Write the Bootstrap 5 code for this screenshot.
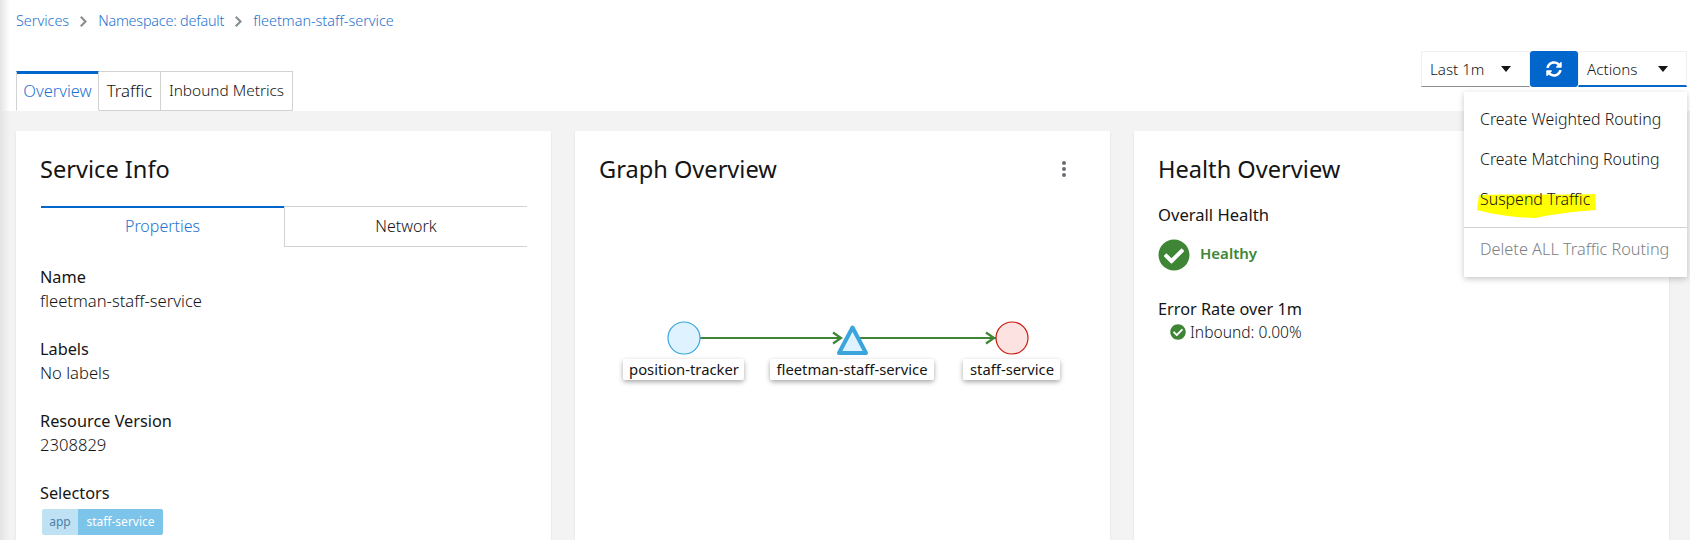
<!doctype html>
<html lang="en">
<head>
<meta charset="utf-8">
<title>fleetman-staff-service</title>
<link href="https://cdn.jsdelivr.net/npm/bootstrap@5.3.0/dist/css/bootstrap.min.css" rel="stylesheet">
<style>
html,body{height:540px;overflow:hidden}
body{font-family:"Noto Sans","Liberation Sans",sans-serif;font-size:16px;line-height:24px;color:#151515;background:#f3f3f3;position:relative}
body::before{content:"";position:absolute;left:0;top:0;bottom:0;width:10px;background:linear-gradient(90deg,#e4e4e4,rgba(228,228,228,0));z-index:3}
.pg-head{background:#fff;height:111px;padding:0 3px 0 16px;position:relative}
.crumbs{height:42px;font-size:14.400px;font-weight:300}
.crumbs a{color:#1f74cf;text-decoration:none}
.crumbs svg{width:7px;height:11px;fill:#8a8d90;margin:0 11px}
.crumbs .cr-n{letter-spacing:-.2px}
.head-row{height:69px}
.tabs-x{align-self:flex-end;height:40px}
.tabx{border:1px solid #d2d2d2;border-left-width:0;padding:0;background:#fff;color:#151515;line-height:38px;white-space:nowrap;text-align:center;font-weight:300}
.tabx:nth-child(1){border-left-width:1px;border-bottom-color:#fff;color:#1f74cf;box-shadow:inset 0 2px 0 #0066cc;border-top-color:#0066cc;width:83px;font-size:16.500px}
.tabx:nth-child(2){width:62px;font-size:16.800px}
.tabx:nth-child(3){width:132px;font-size:15.400px}
.tools{align-self:flex-start;margin-top:9px;height:36px}
.sel{width:109px;height:36px;border:1px solid #f0f0f0;border-bottom:1px solid #8a8d90;padding:0 8px;justify-content:space-between;font-size:15.200px;font-weight:300}
.sel i{border:5.500px solid transparent;border-top:6px solid #151515;border-bottom:0;margin-right:10px}
.sel-on{border-bottom:2px solid #0066cc}
.btn-sync{width:48px;height:36px;background:#0066cc;border-radius:3px}
.btn-sync svg{width:16px;height:16px;fill:#fff}
.act-menu{display:block;position:absolute;top:92px;right:3px;width:223px;height:185px;border:0;border-radius:0;padding:7px 0 8px;box-shadow:0 2px 6px rgba(3,3,3,.22);z-index:5}
.act-menu .dropdown-item{padding:0 16px;height:40px;line-height:40px;font-size:15.900px;font-weight:300;color:#151515}
.act-menu .dropdown-item.disabled{color:#7d8186;height:42px;line-height:42px;font-size:16.300px}
.act-menu .dropdown-divider{margin:8px 0 0;border-color:#d2d2d2;opacity:1}
.hl-wrap{position:relative;z-index:0}
.hl-mark{position:absolute;left:13px;top:15px;width:119px;height:24px;z-index:-1;fill:#ffff00}
.pg-body{padding:20px 21px 0 16px;gap:24px}
.pan{width:535px;height:409px;overflow:hidden;background:#fff;border:0;border-radius:0;box-shadow:0 1px 2px rgba(3,3,3,.1);padding:22px 24px 0;flex:none}
.pan h2{font-size:23.600px;line-height:30px;font-weight:400;margin:1px 0 0}
.sub-tabs{margin:22px 0 0 1px;height:41px;width:486px;font-weight:300}
.sub-tabs div{height:41px;line-height:38px;text-align:center;border-top:1px solid #d2d2d2;border-bottom:1px solid #d2d2d2}
.sub-a{width:243px;border-top:2px solid #0066cc!important;border-bottom:0!important;color:#1f74cf;line-height:37px!important}
.sub-b{flex:1;border-left:1px solid #d2d2d2}
.fld{margin-bottom:24px}
.fld b{display:block;font-weight:400;font-size:16.300px;line-height:24px}
.fld span{display:block;line-height:24px;font-weight:300;font-size:16.600px}
.fields{margin-top:18px}
.chip{margin:4px 0 0 2px;height:26px;width:fit-content;font-size:12px;border-radius:2px;overflow:hidden;line-height:26px}
.chip-k{width:36px;background:#bee1f4;color:#4b7fa8;text-align:center}
.chip-v{width:85px;background:#7cc4e9;color:#fff;text-align:center}
.kebab{width:4px;height:16px;margin:0 20px 0 0;gap:2px}
.kebab i{width:4px;height:4px;border-radius:50%;background:#6a6e73;display:block}
.g-svg{position:absolute;left:0;top:0;width:535px;height:260px}
.g-svg text{font-family:"Noto Sans",sans-serif;font-size:14.800px;fill:#151515;text-anchor:middle}
.hlth-t{font-size:16.600px;margin-top:19px}
.hlth-row{margin-top:8px;height:40px;color:#3e8635;font-weight:600;font-size:15px}
.hlth-row span{margin:-5px 0 0 10px}
.ic{fill:#3e8635;flex:none}
.err-t{margin-top:22px;font-size:16.300px}
.err-r{margin-left:12px;gap:4px;font-size:15.600px;font-weight:300;margin-top:-1px}
</style>
</head>
<body>
<header class="pg-head">
  <nav class="crumbs d-flex align-items-center">
    <a href="#">Services</a>
    <svg viewBox="0 0 7 11"><path d="M1.500 0 7 5.500 1.500 11 0 9.500 4 5.500 0 1.500z"/></svg>
    <a href="#" class="cr-n">Namespace: default</a>
    <svg viewBox="0 0 7 11"><path d="M1.500 0 7 5.500 1.500 11 0 9.500 4 5.500 0 1.500z"/></svg>
    <a href="#">fleetman-staff-service</a>
  </nav>
  <div class="head-row d-flex justify-content-between">
    <div class="tabs-x d-flex">
      <div class="tabx">Overview</div>
      <div class="tabx">Traffic</div>
      <div class="tabx">Inbound Metrics</div>
    </div>
    <div class="tools d-flex">
      <div class="sel d-flex align-items-center"><span>Last 1m</span><i></i></div>
      <div class="btn-sync d-flex align-items-center justify-content-center">
        <svg viewBox="0 0 512 512"><path d="M370.72 133.28C339.458 104.008 298.888 87.962 255.848 88c-77.458.068-144.328 53.178-162.791 126.85-1.344 5.363-6.122 9.15-11.651 9.15H24.103c-7.498 0-13.194-6.807-11.807-14.176C33.933 94.924 134.813 8 256 8c66.448 0 126.791 26.136 171.315 68.685L463.03 40.97C478.149 25.851 504 36.559 504 57.941V192c0 13.255-10.745 24-24 24H345.941c-21.382 0-32.09-25.851-16.971-40.971l41.75-41.749zM32 296h134.059c21.382 0 32.09 25.851 16.971 40.971l-41.75 41.75c31.262 29.273 71.835 45.319 114.876 45.28 77.418-.07 144.315-53.144 162.787-126.849 1.344-5.363 6.122-9.15 11.651-9.15h57.304c7.498 0 13.194 6.807 11.807 14.176C478.067 417.076 377.187 504 256 504c-66.448 0-126.791-26.136-171.315-68.685L48.97 471.03C33.851 486.149 8 475.441 8 454.059V320c0-13.255 10.745-24 24-24z"/></svg>
      </div>
      <div class="sel sel-on d-flex align-items-center"><span>Actions</span><i></i></div>
    </div>
  </div>
  <div class="dropdown-menu act-menu">
    <a class="dropdown-item" href="#">Create Weighted Routing</a>
    <a class="dropdown-item" href="#">Create Matching Routing</a>
    <div class="hl-wrap">
      <svg class="hl-mark" viewBox="0 0 122 24" preserveAspectRatio="none"><path d="M2 1C40 0 90 1 121 0L122 16C95 18 80 20 60 24 40 24 15 20 0 16z"/></svg>
      <a class="dropdown-item" href="#">Suspend Traffic</a>
    </div>
    <hr class="dropdown-divider">
    <a class="dropdown-item disabled" href="#">Delete ALL Traffic Routing</a>
  </div>
</header>
<main class="pg-body d-flex">
  <section class="card pan">
    <h2>Service Info</h2>
    <div class="sub-tabs d-flex"><div class="sub-a">Properties</div><div class="sub-b">Network</div></div>
    <div class="fields">
      <div class="fld"><b>Name</b><span>fleetman-staff-service</span></div>
      <div class="fld"><b>Labels</b><span>No labels</span></div>
      <div class="fld"><b>Resource Version</b><span>2308829</span></div>
      <div class="fld"><b>Selectors</b><div class="chip d-flex"><div class="chip-k">app</div><div class="chip-v">staff-service</div></div></div>
    </div>
  </section>
  <section class="card pan position-relative">
    <div class="d-flex justify-content-between align-items-center">
      <h2>Graph Overview</h2>
      <div class="kebab d-flex flex-column"><i></i><i></i><i></i></div>
    </div>
    <svg class="g-svg" viewBox="575 131 535 260">
      <defs><filter id="ls" x="-20%" y="-30%" width="140%" height="180%"><feDropShadow dx="0" dy="2" stdDeviation="2.500" flood-color="#000" flood-opacity=".35"/></filter></defs>
      <g stroke="#3e8635" stroke-width="2.200" fill="none">
        <path d="M700 338H840"/><path d="M833 332.500l8 5.500-8 5.500"/>
        <path d="M860 338H996"/><path d="M986 332.500l8 5.500-8 5.500"/>
      </g>
      <circle cx="684" cy="338" r="16" fill="#def3ff" stroke="#39a5dc" stroke-width="1.200"/>
      <path d="M852.500 327.500 866 353H839z" fill="#def3ff" stroke="#39a5dc" stroke-width="4" stroke-linejoin="round"/>
      <circle cx="1012" cy="338" r="16" fill="#fde2e2" stroke="#c9190b" stroke-width="1.200"/>
      <g filter="url(#ls)" fill="#fff"><rect x="623" y="359" width="121" height="21" rx="3"/><rect x="770" y="359" width="164" height="21" rx="3"/><rect x="963" y="359" width="97" height="21" rx="3"/></g>
      <text x="684" y="375">position-tracker</text><text x="852" y="375">fleetman-staff-service</text><text x="1012" y="375">staff-service</text>
    </svg>
  </section>
  <section class="card pan">
    <h2>Health Overview</h2>
    <div class="hlth-t">Overall Health</div>
    <div class="hlth-row d-flex align-items-center">
      <svg class="ic" width="32" height="32" viewBox="0 0 512 512"><path d="M504 256c0 136.967-111.033 248-248 248S8 392.967 8 256 119.033 8 256 8s248 111.033 248 248zM227.314 387.314l184-184c6.248-6.248 6.248-16.379 0-22.627l-22.627-22.627c-6.248-6.249-16.379-6.249-22.628 0L216 308.118l-70.059-70.059c-6.248-6.248-16.379-6.248-22.628 0l-22.627 22.627c-6.248 6.248-6.248 16.379 0 22.627l104 104c6.249 6.250 16.379 6.250 22.628.001z"/></svg>
      <span>Healthy</span>
    </div>
    <div class="err-t">Error Rate over 1m</div>
    <div class="err-r d-flex align-items-center">
      <svg class="ic" width="16" height="16" viewBox="0 0 512 512"><path d="M504 256c0 136.967-111.033 248-248 248S8 392.967 8 256 119.033 8 256 8s248 111.033 248 248zM227.314 387.314l184-184c6.248-6.248 6.248-16.379 0-22.627l-22.627-22.627c-6.248-6.249-16.379-6.249-22.628 0L216 308.118l-70.059-70.059c-6.248-6.248-16.379-6.248-22.628 0l-22.627 22.627c-6.248 6.248-6.248 16.379 0 22.627l104 104c6.249 6.250 16.379 6.250 22.628.001z"/></svg>
      <span>Inbound: 0.00%</span>
    </div>
  </section>
</main>
<script src="https://cdn.jsdelivr.net/npm/bootstrap@5.3.0/dist/js/bootstrap.bundle.min.js"></script>
</body>
</html>
